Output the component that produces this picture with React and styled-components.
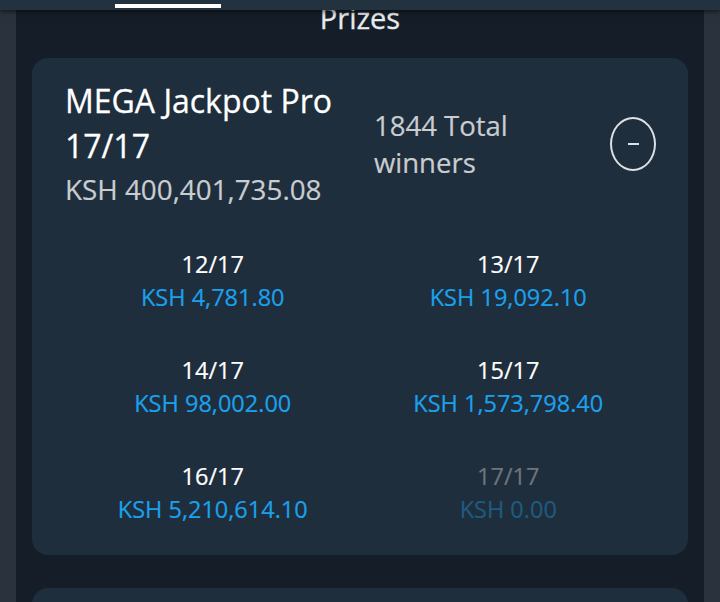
import React from 'react'
import styled, { createGlobalStyle } from 'styled-components'

const GlobalStyle = createGlobalStyle`
    html, body {
        margin: 0;
        padding: 0;
        background: #2a333d;
        font-family: "Open Sans", "Liberation Sans", sans-serif;
    }
`

const Pagina = styled.div`
    position: relative;
    width: 720px;
    height: 602px;
    overflow: hidden;
    display: flex;
    flex-direction: row;
    background: #2a333d;
`

const BarraTopo = styled.div`
    position: absolute;
    top: 0;
    left: 0;
    right: 0;
    height: 10px;
    background: #22323f;
    box-shadow: 0 2px 5px rgba(0, 0, 0, 0.55);
    z-index: 2;
`

const IndicadorAba = styled.div`
    position: absolute;
    top: 4px;
    left: 115px;
    width: 106px;
    height: 4px;
    background: #ffffff;
`

const Lateral = styled.div`
    flex: 0 0 16px;
    background: #2a333d;
`

const Coluna = styled.div`
    flex: 1;
    background: #151e28;
    display: flex;
    flex-direction: column;
    padding: 0 16px;
    & > * {
        flex-shrink: 0;
    }
`

const Titulo = styled.h1`
    margin: 0;
    margin-top: -7px;
    height: 65px;
    line-height: 50px;
    text-align: center;
    font-size: 29px;
    font-weight: 400;
    color: #e8eaec;
    -webkit-text-stroke: 0.3px #e8eaec;
`

const Cartao = styled.div`
    background: #1f2e3c;
    border-radius: 16px;
    padding: 20px 32px 29px 33px;
    margin-bottom: 33px;
    min-height: ${p => p.vazio ? '60px' : 'auto'};
`

const Cabecalho = styled.div`
    display: flex;
    align-items: center;
`

const BlocoJackpot = styled.div`
    flex: 0 0 300px;
    margin-right: 9px;
`

const NomeJackpot = styled.div`
    font-size: 32px;
    line-height: 45px;
    color: #ffffff;
    -webkit-text-stroke: 0.3px #ffffff;
`

const ValorJackpot = styled.div`
    font-size: 27.8px;
    line-height: 42px;
    color: #c9cdd1;
    -webkit-text-stroke: 0.2px #c9cdd1;
`

const Vencedores = styled.div`
    flex: 1;
    max-width: 180px;
    font-size: 27.5px;
    line-height: 37px;
    color: #c9cdd1;
    -webkit-text-stroke: 0.2px #c9cdd1;
`

const BotaoRecolher = styled.div`
    margin-left: auto;
    width: 42px;
    height: 50px;
    border: 2px solid #dde0e3;
    border-radius: 50%;
    display: flex;
    align-items: center;
    justify-content: center;
    &::after {
        content: '';
        width: 11px;
        height: 2px;
        background: #dde0e3;
    }
`

const GradePremios = styled.div`
    display: grid;
    grid-template-columns: 1fr 1fr;
    row-gap: 40px;
    margin-top: 38px;
`

const Premio = styled.div`
    text-align: center;
    font-size: 23.5px;
    line-height: 33px;
    -webkit-text-stroke: 0.2px currentColor;
`

const Acertos = styled.div`
    color: ${p => p.inativo ? '#6d757d' : '#ffffff'};
`

const ValorPremio = styled.div`
    color: ${p => p.inativo ? '#1e5b80' : '#1ba1ec'};
`

const premios = [
    { acertos: '12/17', valor: 'KSH 4,781.80' },
    { acertos: '13/17', valor: 'KSH 19,092.10' },
    { acertos: '14/17', valor: 'KSH 98,002.00' },
    { acertos: '15/17', valor: 'KSH 1,573,798.40' },
    { acertos: '16/17', valor: 'KSH 5,210,614.10' },
    { acertos: '17/17', valor: 'KSH 0.00', inativo: true },
]

export default function App() {
    return (
        <>
            <GlobalStyle />
            <Pagina>
                <BarraTopo>
                    <IndicadorAba />
                </BarraTopo>
                <Lateral />
                <Coluna>
                    <Titulo>Prizes</Titulo>
                    <Cartao>
                        <Cabecalho>
                            <BlocoJackpot>
                                <NomeJackpot>MEGA Jackpot Pro 17/17</NomeJackpot>
                                <ValorJackpot>KSH 400,401,735.08</ValorJackpot>
                            </BlocoJackpot>
                            <Vencedores>1844 Total winners</Vencedores>
                            <BotaoRecolher />
                        </Cabecalho>
                        <GradePremios>
                            {premios.map(p => (
                                <Premio key={p.acertos}>
                                    <Acertos inativo={p.inativo}>{p.acertos}</Acertos>
                                    <ValorPremio inativo={p.inativo}>{p.valor}</ValorPremio>
                                </Premio>
                            ))}
                        </GradePremios>
                    </Cartao>
                    <Cartao vazio />
                </Coluna>
                <Lateral />
            </Pagina>
        </>
    )
}
